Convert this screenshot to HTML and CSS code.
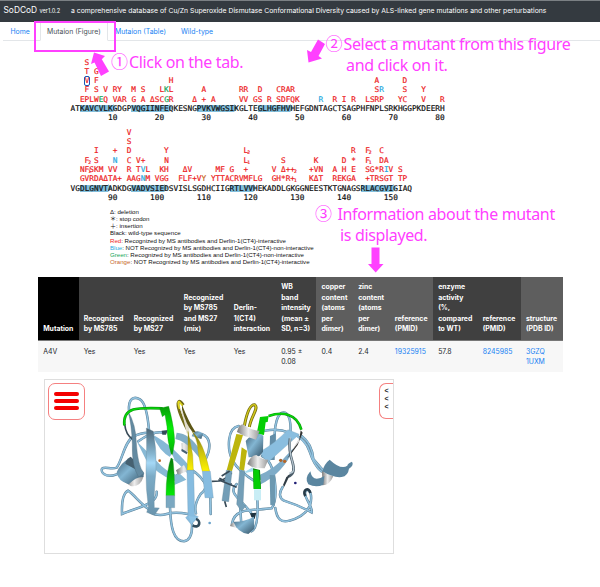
FILE: index.html
```html
<!DOCTYPE html>
<html lang="en">
<head>
<meta charset="utf-8">
<title>SoDCoD</title>
<link rel="stylesheet" href="styles.css">
</head>
<body>
<header class="navbar"><span class="brand">SoDCoD</span><span class="version">ver1.0.2</span><span class="tagline">a comprehensive database of Cu/Zn Superoxide Dismutase Conformational Diversity caused by ALS-linked gene mutations and other perturbations</span></header>
<nav class="tabs"><a class="tab home">Home</a><a class="tab active">Mutaion (Figure)</a><a class="tab table-tab">Mutaion (Table)</a><a class="tab wild">Wild-type</a></nav>
<main>
<section class="sequence">
<div class="block">
<div class="line">   S</div>
<div class="line">   T G</div>
<div class="line">   <span class="picked">V</span> F               H                                           A     D</div>
<div class="line">   F S V RY  M S   L<b class="green">K</b>L      A       RR  D   CRAR                 S<b class="blue">R</b>    S   Y</div>
<div class="line">  EPLW<b class="green">E</b>Q VAR G A ΔSC<b class="green">G</b>R    Δ + A     VV GS R SDFQK    <b class="blue">R</b>  R I R  LSRP   YC   V   R</div>
<div class="line wild-seq">AT<span class="strand">KAVCVLK</span>GDGP<span class="strand">VQGIINFE</span>QKESNG<span class="strand">PVKVWGSI</span>KGLTE<span class="strand">GLHGFHV</span>HEFGDNTAGCTSAGPHFNPLSRKHGGPKDEERH</div>
<div class="line wild-seq">        10        20        30        40        50        60        70        80</div>
</div>
<div class="block">
<div class="line">            V</div>
<div class="line">            S</div>
<div class="line">     I   +  D       Y                L<sub>2</sub>                      R  F<sub>2</sub>  C</div>
<div class="line">   F<sub>2</sub> S   <b class="blue">N</b>  C V+    N                L<sub>1</sub>       S      K     D *  F<sub>1</sub>  DA</div>
<div class="line">  NF<sub>1</sub>SKM VV  R T<b class="blue">V</b>L  KH   ΔV     MF G  +     V Δ++<sub>2</sub>   +VN  A H E  SG*R<b class="blue">I</b>V S</div>
<div class="line">  GVRDAΔTA+ AAG<b class="blue">N</b>M VGG  FLF+V<b class="orange">Y</b> YTTACRVMFLG  GH*R+<sub>1</sub>   KΔT  REKGA  +TRSGT TP</div>
<div class="line wild-seq">VG<span class="strand">DLGNVT</span>ADKDG<span class="strand">VADVSIE</span>DSVISLSGDHCIIG<span class="strand">RTLVV</span>HEKADDLGKGGNEESTKTGNAGS<span class="strand">RLACGVI</span>GIAQ</div>
<div class="line wild-seq">        90       100       110       120       130       140       150</div>
</div>
<div class="legend">
<div>Δ: deletion</div>
<div>＊: stop codon</div>
<div>＋: insertion</div>
<div>Black: wild-type sequence</div>
<div><span class="red">Red</span>: Recognized by MS antibodies and Derlin-1(CT4)-interactive</div>
<div><span class="blue">Blue</span>: NOT Recognized by MS antibodies and Derlin-1(CT4)-non-interactive</div>
<div><span class="green">Green</span>: Recognized by MS antibodies and Derlin-1(CT4)-non-interactive</div>
<div><span class="orange">Orange</span>: NOT Recognized by MS antibodies and Derlin-1(CT4)-interactive</div>
</div>
</section>
<table class="details">
<colgroup><col class="c1"><col class="c2"><col class="c3"><col class="c4"><col class="c5"><col class="c6"><col class="c7"><col class="c8"><col class="c9"><col class="c10"><col class="c11"><col class="c12"></colgroup>
<thead><tr><th class="black">Mutation</th><th>Recognized<br>by MS785</th><th>Recognized<br>by MS27</th><th>Recognized<br>by MS785<br>and MS27<br>(mix)</th><th>Derlin-<br>1(CT4)<br>interaction</th><th>WB<br>band<br>intensity<br>(mean ±<br>SD, n=3)</th><th class="gray">copper<br>content<br>(atoms<br>per<br>dimer)</th><th class="gray">zinc<br>content<br>(atoms<br>per<br>dimer)</th><th class="gray">reference<br>(PMID)</th><th>enzyme<br>activity<br>(%,<br>compared<br>to WT)</th><th>reference<br>(PMID)</th><th class="gray">structure<br>(PDB ID)</th></tr></thead>
<tbody><tr><td>A4V</td><td>Yes</td><td>Yes</td><td>Yes</td><td>Yes</td><td>0.95 ±<br>0.08</td><td>0.4</td><td>2.4</td><td><a>19325915</a></td><td>57.8</td><td><a>8245985</a></td><td><a>3GZQ</a><br><a>1UXM</a></td></tr></tbody>
</table>
<section class="viewer">
<svg class="protein" viewBox="45 380 348 172" width="348" height="172">
<defs>
<linearGradient id="ribbon" x1="0" y1="0" x2="0" y2="1"><stop offset="0" stop-color="#4b6575"/><stop offset=".3" stop-color="#86b6d1"/><stop offset=".4" stop-color="#a5d8f6"/><stop offset=".55" stop-color="#7cabc6"/><stop offset="1" stop-color="#6994ad"/></linearGradient>
<linearGradient id="helix" x1="0" y1="0" x2="1" y2="1"><stop offset="0" stop-color="#426176"/><stop offset=".45" stop-color="#83b6d3"/><stop offset="1" stop-color="#345164"/></linearGradient>
<linearGradient id="silver"><stop offset="0" stop-color="#777"/><stop offset=".5" stop-color="#eee"/><stop offset="1" stop-color="#999"/></linearGradient>
<linearGradient id="leaf" x1="0" y1="0" x2="0" y2="1"><stop offset="0" stop-color="#079c08"/><stop offset=".25" stop-color="#04ef05"/><stop offset=".45" stop-color="#04c505"/><stop offset=".6" stop-color="#078009"/><stop offset="1" stop-color="#04eb05"/></linearGradient>
<linearGradient id="gold" x1="0" y1="0" x2="0" y2="1"><stop offset="0" stop-color="#766d18"/><stop offset=".5" stop-color="#c9bf0e"/><stop offset="1" stop-color="#fff300"/></linearGradient>
</defs>
<g transform="translate(30 370) scale(.33333)">
<g class="coil-edge"><path d="M260 313C225 326 211 305 216 296C225 287 242 300 260 293C277 270 283 216 310 200Q340 184 372 190"/><path d="M380 365C385 400 330 410 276 432C275 405 278 370 294 362C315 375 340 414 371 426"/><path d="M420 412C422 470 430 514 462 514C484 510 487 485 486 462"/><path d="M362 428Q385 440 410 432T474 432"/><path d="M325 214Q370 180 402 188M515 192C545 202 542 238 528 265M440 318Q475 270 522 335Q535 355 512 372Q490 405 498 430"/><path d="M541 382L542 432"/><path d="M297 124C294 84 312 78 330 88Q350 100 357 180"/></g>
<g class="coil"><path d="M260 313C225 326 211 305 216 296C225 287 242 300 260 293C277 270 283 216 310 200Q340 184 372 190"/><path d="M380 365C385 400 330 410 276 432C275 405 278 370 294 362C315 375 340 414 371 426"/><path d="M420 412C422 470 430 514 462 514C484 510 487 485 486 462"/><path d="M362 428Q385 440 410 432T474 432"/><path d="M325 214Q370 180 402 188M515 192C545 202 542 238 528 265M440 318Q475 270 522 335Q535 355 512 372Q490 405 498 430"/><path d="M541 382L542 432"/><path d="M297 124C294 84 312 78 330 88Q350 100 357 180"/></g>
<path class="dark-line" d="M284 162Q287 194 308 208M545 334L568 333Q590 326 605 309M568 325L605 343"/>
<path fill="#344c5a" d="M395 182L414 180 408 194 397 194Z"/>
<path fill="url(#silver)" d="M285 337Q306 307 341 319Q331 353 302 348Z"/>
<path fill="url(#helix)" d="M260 307Q271 278 302 263Q293 290 320 289Q349 307 340 321Q319 319 296 343Q263 333 260 307Z"/>
<path fill="#466171" d="M302 260Q287 268 286 281L324 302Q325 278 302 260Z"/>
<path fill="#87b9d5" d="M320 214L377 270Q409 307 441 315L444 306 469 329 433 345 434 333Q379 312 348 269Z"/>
<path fill="#86b8d6" d="M368 194Q426 222 496 309L479 319Q450 281 423 263Q386 242 368 194Z"/>
<path fill="url(#silver)" d="M454 220L478 211 485 245 456 243ZM438 301L462 285 472 304 444 314Z"/>
<path fill="#476273" d="M455 236L473 247 470 253 454 243Z"/>
<path fill="#80adc7" d="M440 188Q479 190 510 240L526 263 522 280 490 242Q465 214 436 207Z"/>
<path fill="url(#helix)" d="M490 188Q508 178 519 193L514 207 485 199Z"/>
<path fill="#638aa1" stroke="#496777" d="M294 123Q318 164 319 218Q323 287 342 310L326 321Q305 290 307 223Q305 163 294 123Z"/>
<path fill="url(#ribbon)" stroke="#67899b" d="M349 174L370 184Q381 246 378 302Q371 373 373 413L388 414 373 436 350 427 355 412Q347 353 348 300Q351 237 349 174Z"/>
<path fill="none" stroke="#0b960d" stroke-width="8" d="M283 166C278 111 321 112 398 115"/><path fill="none" stroke="#06dd08" stroke-width="4" d="M283 166C278 111 321 112 398 115"/>
<path fill="url(#leaf)" stroke="#128c14" d="M389 115L416 109 422 132Q433 177 434 215Q430 239 427 257Q434 303 434 377L408 377Q408 305 425 257Q411 211 411 170L405 134 397 140Z"/>
<path fill="#fff" d="M416 265L426 251 434 270 423 263Z"/>
<path fill="#7ba8c1" stroke="#668c9f" d="M408 377H434V413H408Z"/>
<path fill="none" stroke="#716a18" stroke-width="9" d="M473 180Q438 111 445 97Q449 88 460 105"/><path fill="none" stroke="#e2d81e" stroke-width="5" d="M449 117Q441 93 448 95L458 107"/>
<path fill="#e2ddcc" d="M450 115Q483 162 478 194L470 190Q463 152 450 115Z"/>
<path fill="#5d5716" d="M456 104Q475 153 497 187L488 187Q468 164 456 118Z"/>
<path fill="url(#gold)" stroke="#a69d0c" d="M474 184Q481 215 488 255L490 301 471 301 474 250ZM487 185Q520 214 539 304L517 304Q505 260 502 224Q500 207 487 185Z"/>
<path fill="#86bce0" stroke="#729bb3" d="M471 301H491L494 435 505 440 484 464 467 443 474 436ZM517 304H541L550 384 525 383Z"/>
<path fill="none" stroke="#304b5b" stroke-width="8" d="M488 466C511 478 513 451 498 447"/>
<path fill="#8ec4e6" d="M476 438L500 442 484 461Z"/>
<circle cx="389" cy="272" r="4" fill="#bb6422"/><circle cx="539" cy="459" r="4" fill="#6da4cc"/>
</g>
<g transform="translate(220 370) scale(.33333)">
<g class="coil-edge"><path d="M56 168C22 173 20 236 38 272Q57 307 118 342"/><path d="M109 190Q162 170 208 188Q255 202 269 245T304 304"/><path d="M167 238C157 163 175 122 195 128Q217 139 210 205"/><path d="M244 197Q276 221 280 267L311 303"/><path d="M50 342C20 371 66 388 94 430M36 461C44 410 103 423 155 415Q172 390 164 330T126 258"/><path d="M112 388Q117 474 94 484M60 405L64 463"/><path d="M166 414Q172 463 208 452Q255 440 270 406C280 371 265 350 256 365C249 382 280 409 275 427Q239 407 192 392Q170 379 188 351"/></g>
<g class="coil"><path d="M56 168C22 173 20 236 38 272Q57 307 118 342"/><path d="M109 190Q162 170 208 188Q255 202 269 245T304 304"/><path d="M167 238C157 163 175 122 195 128Q217 139 210 205"/><path d="M244 197Q276 221 280 267L311 303"/><path d="M50 342C20 371 66 388 94 430M36 461C44 410 103 423 155 415Q172 390 164 330T126 258"/><path d="M112 388Q117 474 94 484M60 405L64 463"/><path d="M166 414Q172 463 208 452Q255 440 270 406C280 371 265 350 256 365C249 382 280 409 275 427Q239 407 192 392Q170 379 188 351"/></g>
<path fill="none" stroke="#746e12" stroke-width="9" d="M73 168C80 130 91 103 104 104C118 113 93 139 88 171"/><path fill="none" stroke="#d4c91b" stroke-width="4" d="M73 168C80 130 91 103 104 104C118 113 93 139 88 171"/>
<path fill="#bdb50c" d="M49 192L69 195 36 303 20 301ZM65 232L81 242 72 302 58 298Z"/>
<path fill="#739eb7" stroke="#557b91" d="M19 301L36 304 26 395 6 392ZM59 302H74L69 402 78 407 65 424 50 403Z"/>
<path class="dark-line" d="M5 318L29 303M-5 329L50 352M14 394L19 411"/>
<path fill="#638da7" d="M150 198L167 190 164 270 148 270Z"/>
<path fill="#8abedf" stroke="#78a4bd" d="M119 246Q165 220 204 179L238 193Q193 233 149 272L138 273Z"/>
<path fill="#7facc8" d="M107 320Q166 298 209 246L222 233Q192 309 118 345L123 331Z"/>
<path fill="#333" d="M242 181L248 188 233 225 209 257 201 266 238 208Z"/><path fill="#ddd" d="M236 207L239 213 217 240Z"/>
<path fill="none" stroke="#4b5d69" stroke-width="8" d="M210 205Q205 239 217 275T204 320"/><path fill="none" stroke="#b4c4ce" stroke-width="4" d="M211 202Q206 239 217 275T208 309"/>
<path fill="#2f3b44" d="M210 314L193 350 189 345 199 321Z"/>
<path fill="#078c09" d="M105 206L112 238 99 240ZM99 295L120 300 123 357 101 356Z"/>
<path fill="#04ce05" d="M120 141L146 138 143 156 137 157 132 195 110 191ZM101 300H116L122 357H101Z"/>
<path fill="none" stroke="#0b970e" stroke-width="8" d="M146 138C186 124 231 130 244 179"/><path fill="none" stroke="#06db07" stroke-width="4" d="M146 138C186 124 231 130 244 179"/>
<path fill="url(#helix)" d="M77 213Q104 179 130 197L129 245 118 259 86 262Z"/>
<path fill="url(#silver)" d="M51 186Q57 164 69 163Q91 181 119 182L108 209 86 202 73 198Z"/>
<path fill="url(#silver)" d="M82 282Q92 255 109 255Q128 270 145 269L134 295 108 294 95 290Z"/>
<path fill="#c8edf5" d="M102 358H123V391H102Z"/><path fill="#a5ddf0" d="M75 305L98 292 100 304 76 309Z"/>
<path fill="#6c98b0" d="M149 315L165 316 165 407 151 405Z"/><path fill="#1f3340" d="M90 430L109 428 104 447 94 441Z"/>
<path fill="url(#silver)" d="M30 468Q34 456 48 455L62 472 50 474Z"/>
<path fill="url(#helix)" d="M40 455Q70 457 102 440L103 476 85 492Q52 487 40 455Z"/>
<path fill="url(#silver)" d="M306 303Q325 315 340 319Q328 347 307 346Q307 324 306 303Z"/>
<path fill="#5b86a0" d="M271 304Q252 326 265 343Q288 354 310 344L313 318Q278 340 271 304ZM307 304Q313 281 329 269Q363 301 382 287Q382 281 396 275Q403 285 387 296Q384 318 365 321Q340 324 307 304Z"/>
<path fill="none" stroke="#263a47" stroke-width="8" d="M256 378C245 359 268 349 271 369"/>
<circle cx="182" cy="271" r="5" fill="#a76530"/><circle cx="194" cy="274" r="5" fill="#b86525"/><circle cx="226" cy="339" r="4" fill="#211f75"/>
</g>
</svg>
<div class="menu"><i></i><i></i><i></i></div>
<div class="drawer"><span>&lt;</span><span>&lt;</span><span>&lt;</span></div>
</section>
</main>
<div class="focus"></div>
<div class="note one"><span class="num">①</span>Click on the tab.</div>
<div class="note two"><span class="num">②</span>Select a mutant from this figure</div>
<div class="note two-b">and click on it.</div>
<div class="note three"><span class="num">③</span>Information about the mutant</div>
<div class="note three-b">is displayed.</div>
<svg class="arrows" viewBox="0 0 600 587" width="600" height="587"><path d="M94 52.500L105 56 101.800 59.300 109 71.500 101 76 94.500 62.500 91 64Z"/><path d="M318 39.500L325 44 318.500 56 322 58.500 308.500 62.500 307 50 311 52Z"/><path d="M371.500 247.500H379.500V264H383.500L375.700 272.500 368 264H371.500Z"/></svg>
</body>
</html>
```
FILE: styles.css
```css
* { box-sizing: border-box; }
body { margin: 0; width: 600px; height: 587px; overflow: hidden; background: #fff; color: #212529; font-family: Inter, sans-serif; position: relative; }
.navbar { height: 22px; background: #343a40; border-top: 1px solid #7b8084; color: #fff; display: flex; align-items: center; padding: 0 0 3px 3.5px; white-space: nowrap; }
.brand { font-size: 8.4px; width: 36px; }
.version { font-size: 5.6px; width: 31.500px; padding-top: 2px; }
.tagline { font-size: 6.84px; }
.tabs { height: 19px; margin-left: 3px; border-bottom: 1px solid #e3e6e9; display: flex; font-size: 6.9px; line-height: 19px; color: #1681f3; white-space: nowrap; }
.tab { height: 19px; }
.home { width: 36.500px; padding-left: 7.500px; }
.active { width: 68.500px; padding-left: 6.500px; border: 1px solid #e3e6e9; border-top: 0; border-bottom-color: #fff; background: #fff; color: #495057; }
.table-tab { width: 70px; padding-left: 7px; }
.wild { padding-left: 3px; }
.sequence { padding: 16.500px 0 0 70.600px; height: 236px; }
.block { font: 7.77px "DejaVu Sans Mono", monospace; color: #ed1c24; margin-bottom: 5.300px; -webkit-text-stroke: .2px currentColor; }
.line { height: 9.310px; line-height: 9.310px; white-space: pre; }
.line b { font-weight: normal; }
.line sub { display: inline-block; width: 0; font-size: 4.6px; line-height: 0; vertical-align: -1px; text-indent: -1px; }
.wild-seq { color: #111; }
.strand { display: inline-block; height: 7px; line-height: 7px; background: #82bfdc; position: relative; }
.strand::after { content: ""; position: absolute; left: 100%; top: -1px; border-left: 4px solid #82bfdc; border-top: 4.500px solid transparent; border-bottom: 4.500px solid transparent; z-index: -1; }
.picked { outline: 1px solid #1856b5; border-radius: 1px; display: inline-block; height: 8px; line-height: 8px; }
.red { color: #ed1c24; }
.blue { color: #27aae1; }
.green { color: #18a65a; }
.orange { color: #c7681f; }
.legend { margin: 3px 0 0 39.400px; font: 6.11px/7.28px "Liberation Sans", "Noto Sans CJK JP", sans-serif; color: #111; white-space: nowrap; }
.legend div { height: 7.280px; }
.details { width: 525px; margin-left: 38px; border-collapse: collapse; table-layout: fixed; font-size: 6.9px; line-height: 10.400px; }
.c1 { width: 40.500px; } .c2, .c3, .c4 { width: 50px; } .c5 { width: 47.500px; } .c6 { width: 40.300px; } .c7, .c8 { width: 36.700px; } .c9 { width: 43.300px; } .c10 { width: 44.500px; } .c11 { width: 43.300px; } .c12 { width: 42.200px; }
th { height: 63px; padding: 5px 0 5px 5.200px; vertical-align: bottom; text-align: left; background: #404040; color: #fff; font-weight: 700; white-space: nowrap; border-bottom: 1px solid #777; }
th.black { background: #000; }
th.gray { background: #5e5e5e; }
td { height: 32px; padding: 6px 0 4px 5.200px; vertical-align: top; background: #f7f7f7; white-space: nowrap; }
td a { color: #1681f3; }
.viewer { width: 350px; height: 175px; margin: 7px 0 0 44px; border: 1px solid #dedede; position: relative; }
.protein { display: block; }
.coil, .coil-edge { fill: none; stroke-linecap: round; }
.coil-edge { stroke: #5c8197; stroke-width: 7.5; }
.coil { stroke: #91c2df; stroke-width: 4.5; }
.dark-line { fill: none; stroke: #384a57; stroke-width: 5; }
.menu { position: absolute; left: 3px; top: 3px; width: 37px; height: 37px; border: 1px solid #f58080; border-radius: 7px; background: #fff; display: flex; flex-direction: column; align-items: center; justify-content: center; gap: 3.200px; padding-bottom: 1px; }
.menu i { width: 24.500px; height: 3.800px; border-radius: 2px; background: #f40000; }
.drawer { position: absolute; right: 0; top: 3px; width: 14px; height: 36px; border: 1px solid #f58080; border-right: 0; border-radius: 7px 0 0 7px; display: flex; flex-direction: column; align-items: center; padding-top: 3px; font: bold 7px/8.2px "Liberation Sans", sans-serif; color: #222; }
.focus { position: absolute; left: 33.500px; top: 20.500px; width: 82.500px; height: 31px; border: 2px solid #ff40ff; }
.note { position: absolute; font: 16px/20px "Noto Sans", sans-serif; letter-spacing: -.35px; color: #ff40ff; white-space: nowrap; }
.num { display: inline-block; width: 18px; letter-spacing: 0; font: 17px/20px "Noto Sans CJK JP", sans-serif; }
.one { left: 111px; top: 50.500px; }
.two { left: 325.500px; top: 33px; }
.two-b { left: 346px; top: 55px; }
.three { left: 315px; top: 202.500px; }
.three .num { width: 22.500px; }
.three-b { left: 340px; top: 225px; }
.arrows { position: absolute; left: 0; top: 0; fill: #ff40ff; pointer-events: none; }
```
